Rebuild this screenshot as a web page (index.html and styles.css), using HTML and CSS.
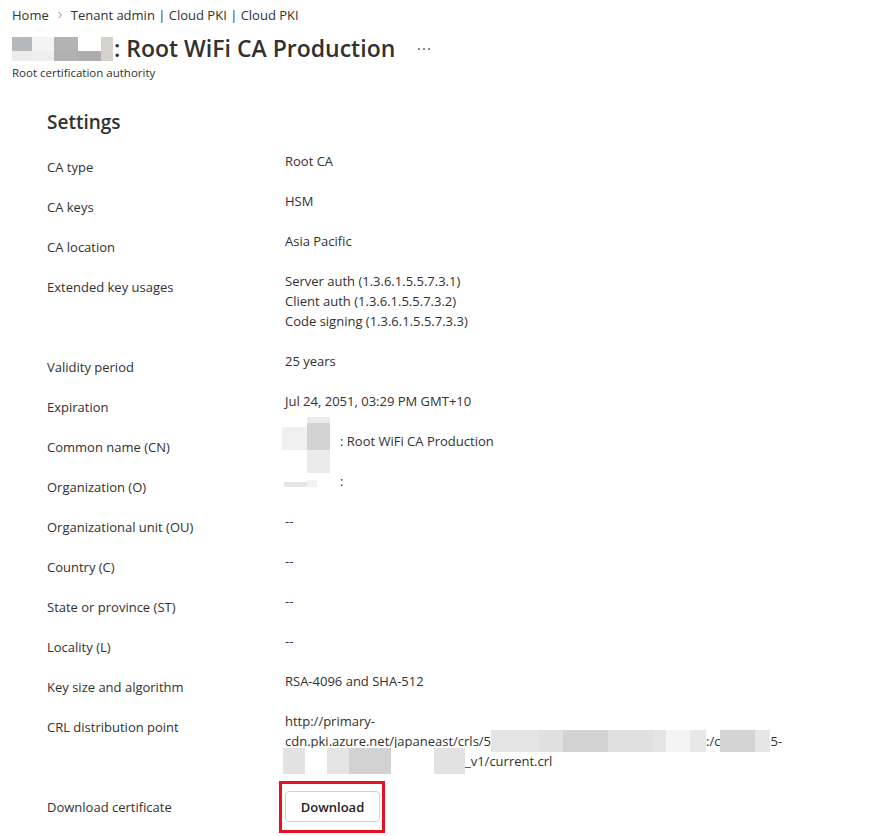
FILE: index.html
```html
<!DOCTYPE html>
<html>
<head>
	<title>Root WiFi CA Production</title>
	<meta charset="utf-8">
	<link rel="stylesheet" href="styles.css">
</head>
<body>
<div class='page'>
	<nav class='crumbs'>
		<a>Home</a>
		<svg class='chev' width='6' height='8' viewBox='0 0 6 8'><path d='M1.5 1 L4.5 4 L1.5 7' fill='none' stroke='#8a8886' stroke-width='1'/></svg>
		<a>Tenant admin | Cloud PKI | Cloud PKI</a>
	</nav>
	<div class='title-row'>
		<h1>
			<span class='mask title-mask'>
				<i style='background:#b5b9bc'></i><i style='background:#f3f4f6'></i><i style='background:#b3b3b3'></i><i style='background:#fff'></i><i style='background:#d5d1cd'></i>
				<i style='background:#ececec'></i><i style='background:#efefee'></i><i style='background:#b1b1b1'></i><i style='background:#adadad'></i><i style='background:#d5d1cd'></i>
			</span>: Root WiFi CA Production
		</h1>
		<svg class='more' width='14' height='4' viewBox='0 0 14 4'><rect x='0' y='1' width='2' height='2' fill='#8a8886'/><rect x='5' y='1' width='2' height='2' fill='#8a8886'/><rect x='10' y='1' width='2' height='2' fill='#8a8886'/></svg>
	</div>
	<div class='subtitle'>Root certification authority</div>

	<section class='settings'>
		<h2>Settings</h2>
		<div class='row'><div class='label'>CA type</div><div class='value'>Root CA</div></div>
		<div class='row'><div class='label'>CA keys</div><div class='value'>HSM</div></div>
		<div class='row'><div class='label'>CA location</div><div class='value'>Asia Pacific</div></div>
		<div class='row'>
			<div class='label'>Extended key usages</div>
			<div class='value'>
				<div>Server auth (1.3.6.1.5.5.7.3.1)</div>
				<div>Client auth (1.3.6.1.5.5.7.3.2)</div>
				<div>Code signing (1.3.6.1.5.5.7.3.3)</div>
			</div>
		</div>
		<div class='row'><div class='label'>Validity period</div><div class='value'>25 years</div></div>
		<div class='row'><div class='label'>Expiration</div><div class='value'>Jul 24, 2051, 03:29 PM GMT+10</div></div>
		<div class='row'>
			<div class='label'>Common name (CN)</div>
			<div class='value'><span class='hidden-name'><span class='blot cn-a'></span><span class='blot cn-b'></span><span class='blot cn-c'></span></span>: Root WiFi CA Production</div>
		</div>
		<div class='row'>
			<div class='label'>Organization (O)</div>
			<div class='value'><span class='hidden-name'><span class='blot org-a'></span><span class='blot org-b'></span></span>:</div>
		</div>
		<div class='row'><div class='label'>Organizational unit (OU)</div><div class='value'>--</div></div>
		<div class='row'><div class='label'>Country (C)</div><div class='value'>--</div></div>
		<div class='row'><div class='label'>State or province (ST)</div><div class='value'>--</div></div>
		<div class='row'><div class='label'>Locality (L)</div><div class='value'>--</div></div>
		<div class='row'><div class='label'>Key size and algorithm</div><div class='value'>RSA-4096 and SHA-512</div></div>
		<div class='row'>
			<div class='label'>CRL distribution point</div>
			<div class='value'>
				<div>http://primary-</div>
				<div class='url-line'>cdn.pki.azure.net/japaneast/crls/5<span class='mask url-mask-a'><i style='background:#e4e4e4'></i><i style='background:#e0e0e0'></i><i style='background:#d2d2d2'></i><i style='background:#e0e0e0'></i><i style='background:#e4e4e4'></i><i style='background:#f4f4f4'></i><i style='background:#e8e8e8'></i></span>:/c<span class='mask url-mask-b'><i style='background:#d4d4d4'></i><i style='background:#e6e6e6'></i></span>5-</div>
				<div class='url-line'><span class='mask url-mask-c'><i style='background:#e2e2e2'></i><i style='background:#fff'></i><i style='background:#e4e4e4'></i><i style='background:#d2d2d2'></i><i style='background:#fff'></i><i style='background:#e2e2e2'></i></span>_v1/current.crl</div>
			</div>
		</div>
		<div class='row'>
			<div class='label'>Download certificate</div>
			<div class='value'>
				<div class='callout'><button class='btn'>Download</button></div>
			</div>
		</div>
	</section>
</div>
</body>
</html>
```

FILE: styles.css
```css
body {
	margin: 0;
	background: #fff;
	color: #323130;
	font-family: "Segoe UI", "Open Sans", sans-serif;
}
.page {
	padding: 6px 12px 0;
}
.crumbs {
	display: flex;
	align-items: center;
	gap: 8px;
	height: 18px;
	font-size: 13px;
	line-height: 18px;
}
.title-row {
	display: flex;
	align-items: center;
	gap: 23px;
	margin-top: 8px;
	height: 32px;
}
h1 {
	margin: 0;
	display: flex;
	align-items: center;
	font-size: 23px;
	font-weight: 600;
	line-height: 32px;
}
.mask {
	display: inline-grid;
	vertical-align: middle;
}
.mask i {
	display: block;
}
.title-mask {
	grid-template-columns: 20px 22px 24px 23px 12px;
	grid-template-rows: 14px 10px;
	margin: 2px 1px 0 0;
}
.more {
	margin-top: 2px;
}
.subtitle {
	margin-top: 1px;
	font-size: 11.5px;
	line-height: 16px;
}
.settings {
	padding: 27px 0 0 35px;
}
h2 {
	margin: 0 0 15px;
	font-size: 19px;
	font-weight: 600;
	line-height: 28px;
}
.row {
	display: flex;
	padding-bottom: 20px;
	font-size: 13px;
	line-height: 20px;
}
.label {
	width: 238px;
	flex-shrink: 0;
	margin: 6px 0 -6px;
}
.value {
	min-width: 0;
}
.hidden-name {
	position: relative;
	display: inline-block;
	width: 55px;
	height: 20px;
	vertical-align: top;
}
.blot {
	position: absolute;
}
.cn-a {
	left: -3px;
	top: -4px;
	width: 25px;
	height: 23px;
	background: #f0f0f0;
}
.cn-b {
	left: 22px;
	top: -14px;
	width: 23px;
	height: 56px;
	background: #ebebeb;
}
.cn-c {
	left: 22px;
	top: -8px;
	width: 23px;
	height: 27px;
	background: #d2d2d2;
}
.org-a {
	left: -1px;
	top: 11px;
	width: 23px;
	height: 5px;
	background: #e6e6e6;
}
.org-b {
	left: 22px;
	top: 9px;
	width: 10px;
	height: 7px;
	background: #f2f2f2;
}
.url-line {
	height: 20px;
	white-space: nowrap;
}
.url-line .mask {
	vertical-align: top;
}
.url-mask-a {
	grid-template-columns: 48px 24px 45px 45px 13px 24px 16px;
	grid-template-rows: 22px;
	margin-top: -1px;
}
.url-mask-b {
	grid-template-columns: 35px 15px;
	grid-template-rows: 22px;
	margin-top: -1px;
}
.url-mask-c {
	grid-template-columns: 22px 22px 22px 42px 43px 31px;
	grid-template-rows: 26px;
	margin: -3px 0 0 -2px;
}
.callout {
	width: fit-content;
	margin: -10px 0 0 -6px;
	padding: 7px 2px 8px 3px;
	border: 3px solid #e81123;
}
.btn {
	display: block;
	width: 95px;
	height: 31px;
	padding: 0;
	border: 1px solid #d1d1d1;
	border-radius: 4px;
	background: #fff;
	color: #242424;
	font-family: inherit;
	font-size: 13px;
	font-weight: 600;
}
```
